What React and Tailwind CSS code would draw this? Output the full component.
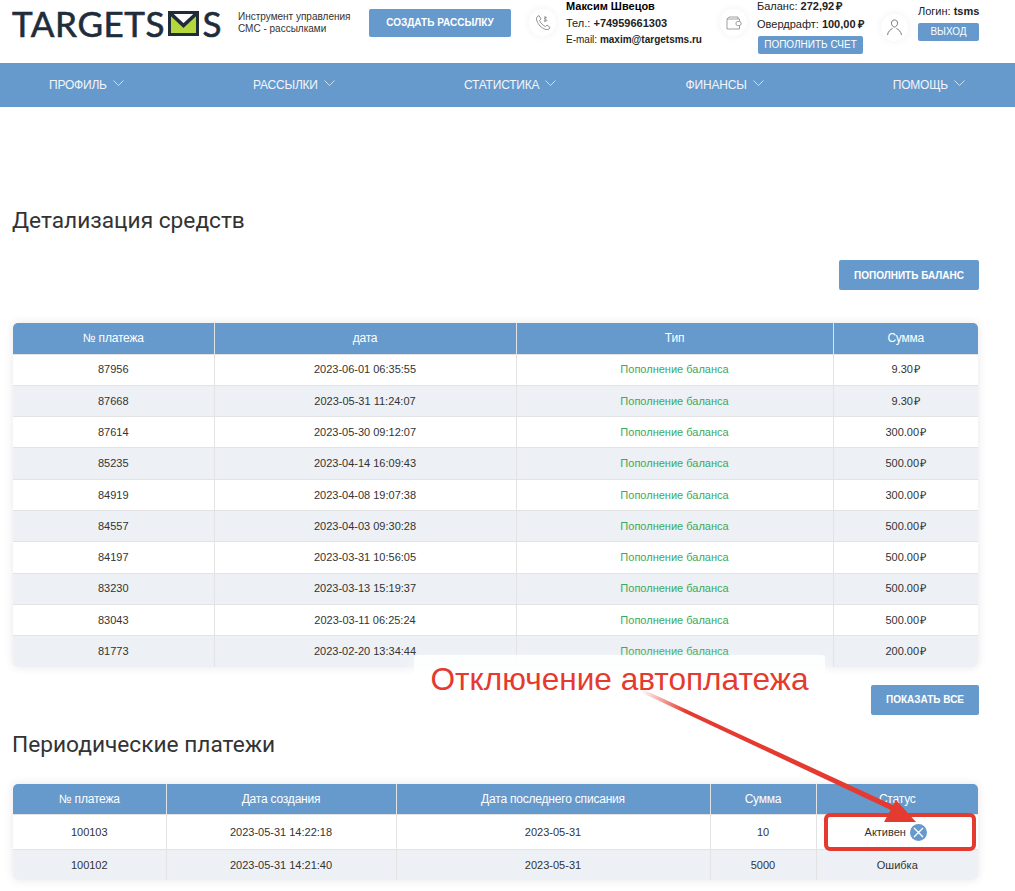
import React from "react";

const blue = "bg-[#6699cc]";

const payments = [
  ["87956", "2023-06-01 06:35:55", "9.30"],
  ["87668", "2023-05-31 11:24:07", "9.30"],
  ["87614", "2023-05-30 09:12:07", "300.00"],
  ["85235", "2023-04-14 16:09:43", "500.00"],
  ["84919", "2023-04-08 19:07:38", "300.00"],
  ["84557", "2023-04-03 09:30:28", "500.00"],
  ["84197", "2023-03-31 10:56:05", "500.00"],
  ["83230", "2023-03-13 15:19:37", "500.00"],
  ["83043", "2023-03-11 06:25:24", "500.00"],
  ["81773", "2023-02-20 13:34:44", "200.00"],
];

function Chevron() {
  return (
    <svg width="11" height="6" viewBox="0 0 11 6" fill="none" stroke="#cfe0f1" strokeWidth="1" className="mb-1">
      <path d="M0.5 0.5 L5.5 5.5 L10.5 0.5" />
    </svg>
  );
}

function IconCircle({ children, className }) {
  return (
    <div className={`w-[27px] h-[27px] rounded-full bg-white shadow-[0_0_10px_rgba(0,0,0,0.06)] flex items-center justify-center shrink-0 ${className}`}>
      {children}
    </div>
  );
}

function Logo() {
  return (
    <div className="flex items-center h-[26px] text-[#1f2d3a] font-['Lato',sans-serif] text-[35px] leading-none tracking-[0.6px] [-webkit-text-stroke:0.6px_#1f2d3a] w-[210px]">
      <span className="w-[158px]">TARGETS</span>
      <svg width="31" height="25" viewBox="0 0 31 25" className="shrink-0">
        <rect width="31" height="25" fill="#1f2d3a" />
        <rect x="3" y="3" width="25" height="19" fill="#b5d93c" />
        <path d="M3 3 L15.5 14 L28 3 Z" fill="#ffffff" />
        <path d="M1 1 L15.5 14.5 L30 1" fill="none" stroke="#1f2d3a" strokeWidth="3.5" />
      </svg>
      <span className="ml-[3px]">S</span>
    </div>
  );
}

function Header() {
  return (
    <div className="h-[63px] flex text-[11px] leading-none text-black">
      <div className="ml-3 mt-[10px] w-[210px] shrink-0"><Logo /></div>
      <div className="ml-[16px] mt-[11px] text-[#333] text-[10px] leading-[12px] w-[125px]">
        Инструмент управления<br />СМС - рассылками
      </div>
      <div className={`ml-[6px] mt-[9px] w-[142px] h-7 ${blue} rounded-[2px] text-white font-bold text-[10px] flex items-center justify-center`}>
        СОЗДАТЬ РАССЫЛКУ
      </div>
      <IconCircle className="ml-[18px] mt-[9px]">
        <svg width="16" height="17" viewBox="0 0 16 17" fill="none" stroke="#777" strokeWidth="0.8">
          <path d="M4 1.5 L2 3 C0.5 5 2.5 9 5 12 C8 15 12 16.5 14 15 L15 13.5 L12 11 L10.5 12.5 C8.5 12 5 8.5 4.5 6.5 L6 5 Z" />
          <path d="M10 2 V8 M12 3.5 C10.5 3 9 3.5 10 5 C11 5.5 12.5 6 11.5 7 C11 7.3 10 7.2 9 6.8" strokeWidth="0.7" />
        </svg>
      </IconCircle>
      <div className="ml-[10px] w-[154px]">
        <div className="font-bold mt-[1px] h-[12px]">Максим Швецов</div>
        <div className="mt-[5px] h-[12px] text-[#222]">Тел.: <b>+74959661303</b></div>
        <div className="mt-[5px] h-[12px] text-[10px] text-[#222]">E-mail: <b>maxim@targetsms.ru</b></div>
      </div>
      <IconCircle className="mt-[9px]">
        <svg width="16" height="14" viewBox="0 0 16 14" fill="none" stroke="#888" strokeWidth="0.8">
          <path d="M1 3 L1 13 L13.5 13 L13.5 9.5 M13.5 5.5 L13.5 3 L1 3 M1 3 L3 1 L12 1 L12 3" />
          <rect x="10" y="5.5" width="5" height="4" rx="1.5" />
        </svg>
      </IconCircle>
      <div className="ml-[10px] w-[114px] text-[#222]">
        <div className="mt-[1px] h-[12px]">Баланс: <b>272,92<span className="ml-[2px]">₽</span></b></div>
        <div className="mt-[6px] h-[12px]">Овердрафт: <b>100,00<span className="ml-[2px]">₽</span></b></div>
        <div className={`mt-[5px] ml-[1px] w-[105px] h-[18px] ${blue} rounded-[2px] text-white text-[10px] flex items-center justify-center`}>
          ПОПОЛНИТЬ СЧЕТ
        </div>
      </div>
      <IconCircle className="ml-[10px] mt-[14px]">
        <svg width="17" height="17" viewBox="0 0 17 17" fill="none" stroke="#666" strokeWidth="0.9">
          <path d="M8.5 1 C6.5 1 5.5 2.3 5.5 4.2 C5.5 6 6.7 8 8.5 8 C10.3 8 11.5 6 11.5 4.2 C11.5 2.3 10.5 1 8.5 1 Z" />
          <path d="M1.5 16 C2 12.5 4.5 10.5 6.5 9.5 M15.5 16 C15 12.5 12.5 10.5 10.5 9.5" />
        </svg>
      </IconCircle>
      <div className="ml-[10px] w-[61px] text-[#222]">
        <div className="mt-[6px] h-[12px] whitespace-nowrap">Логин: <b>tsms</b></div>
        <div className={`mt-[5px] h-[18px] ${blue} rounded-[2px] text-white text-[10px] flex items-center justify-center`}>
          ВЫХОД
        </div>
      </div>
    </div>
  );
}

function Nav() {
  const items = ["ПРОФИЛЬ", "РАССЫЛКИ", "СТАТИСТИКА", "ФИНАНСЫ", "ПОМОЩЬ"];
  return (
    <div className={`h-11 ${blue} flex items-center justify-between pl-[49px] pr-[50px]`}>
      {items.map((item) => (
        <div key={item} className="flex items-center gap-[6px] text-[#f2f6fb] text-xs tracking-[-0.2px]">
          {item}
          <Chevron />
        </div>
      ))}
    </div>
  );
}

function TableHead({ cols }) {
  return (
    <thead>
      <tr className={`h-[31px] ${blue} text-white text-xs tracking-[-0.2px]`}>
        {cols.map((c, i) => (
          <th key={c} className={`font-normal ${i ? "border-l border-[#e3e3e3]" : ""}`}>{c}</th>
        ))}
      </tr>
    </thead>
  );
}

function Cell({ first, className, children }) {
  return <td className={`text-center border-t border-[#e3e3e3] ${first ? "" : "border-l"} ${className || ""}`}>{children}</td>;
}

function Table({ widths, children }) {
  return (
    <div className="ml-[13px] mr-[37px] rounded-[5px] overflow-hidden shadow-[0_0_10px_rgba(0,0,0,0.1)]">
      <table className="w-full table-fixed border-collapse text-[11px] text-[#333]">
        <colgroup>
          {widths.map((w, i) => <col key={i} className={w} />)}
        </colgroup>
        {children}
      </table>
    </div>
  );
}

function Annotation() {
  return (
    <>
      <div className="absolute left-[414px] top-[655px] w-[411px] h-[50px] bg-white/90 rounded-[3px] shadow-[0_6px_14px_rgba(255,255,255,0.9)] flex items-center justify-center text-[#e53a2f] text-[31.6px]">
        Отключение автоплатежа
      </div>
      <svg className="absolute left-0 top-0 pointer-events-none" width="1015" height="891">
        <defs>
          <linearGradient id="fade" gradientUnits="userSpaceOnUse" x1="640" y1="692" x2="684" y2="714">
            <stop offset="0" stopColor="#e53a2f" stopOpacity="0" />
            <stop offset="1" stopColor="#e53a2f" />
          </linearGradient>
        </defs>
        <polygon points="636,690 638,687 897,807 895,812" fill="url(#fade)" />
        <polygon points="896,800 884,822 916,822" fill="#e53a2f" />
      </svg>
      <div className="absolute left-[824px] top-[813px] w-[152px] h-[38px] border-4 border-[#e53a2f] rounded-[6px]" />
    </>
  );
}

export default function App() {
  return (
    <div className="relative w-[1015px] h-[891px] overflow-hidden bg-white font-['Liberation_Sans',sans-serif]">
      <Header />
      <Nav />
      <h1 className="ml-3 mt-[100px] h-7 text-[22.7px] leading-7 text-[#333] font-['Roboto',sans-serif]">Детализация средств</h1>
      <div className="mt-[25px] mr-9 flex justify-end">
        <div className={`w-[140px] h-[30px] ${blue} rounded-[2px] text-white font-bold text-[10px] flex items-center justify-center`}>ПОПОЛНИТЬ БАЛАНС</div>
      </div>
      <div className="mt-[33px]">
        <Table widths={["w-[201px]", "w-[302px]", "w-[317px]", "w-auto"]}>
          <TableHead cols={["№ платежа", "дата", "Тип", "Сумма"]} />
          <tbody>
            {payments.map((p, i) => (
              <tr key={p[0]} className={`h-[31.3px] ${i % 2 ? "bg-[#edf0f5]" : "bg-white"}`}>
                <Cell first>{p[0]}</Cell>
                <Cell>{p[1]}</Cell>
                <Cell className="text-[#3aaa5c]">Пополнение баланса</Cell>
                <Cell>{p[2]}<span className="ml-[1px]">₽</span></Cell>
              </tr>
            ))}
          </tbody>
        </Table>
      </div>
      <div className="mt-[18px] mr-9 flex justify-end">
        <div className={`w-[108px] h-[30px] ${blue} rounded-[2px] text-white font-bold text-[10px] flex items-center justify-center`}>ПОКАЗАТЬ ВСЕ</div>
      </div>
      <h2 className="ml-3 mt-[16px] h-7 text-[22.7px] leading-7 text-[#333] font-['Roboto',sans-serif]">Периодические платежи</h2>
      <div className="mt-[25px]">
        <Table widths={["w-[153px]", "w-[230px]", "w-[314px]", "w-[106px]", "w-auto"]}>
          <TableHead cols={["№ платежа", "Дата создания", "Дата последнего списания", "Сумма", "Статус"]} />
          <tbody>
            <tr className="h-[35px] bg-white">
              <Cell first>100103</Cell>
              <Cell>2023-05-31 14:22:18</Cell>
              <Cell>2023-05-31</Cell>
              <Cell>10</Cell>
              <Cell className="pr-[3px]">
                <span className="inline-flex items-center gap-1">
                  Активен
                  <span className={`w-[17px] h-[17px] rounded-full ${blue} flex items-center justify-center`}>
                    <svg width="11" height="11" viewBox="0 0 11 11" stroke="#fff" strokeWidth="1.3">
                      <path d="M1 1 L10 10 M10 1 L1 10" />
                    </svg>
                  </span>
                </span>
              </Cell>
            </tr>
            <tr className="h-[30px] bg-[#edf0f5]">
              <Cell first>100102</Cell>
              <Cell>2023-05-31 14:21:40</Cell>
              <Cell>2023-05-31</Cell>
              <Cell>5000</Cell>
              <Cell>Ошибка</Cell>
            </tr>
          </tbody>
        </Table>
      </div>
      <Annotation />
    </div>
  );
}
